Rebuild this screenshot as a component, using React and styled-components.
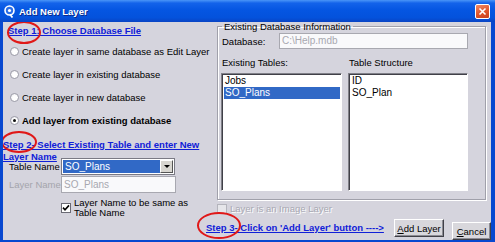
import React from "react";
import styled, { createGlobalStyle } from "styled-components";

const GlobalStyle = createGlobalStyle`
  html, body { margin: 0; padding: 0; background: #fff; }
  body { font-family: "Liberation Sans", Arial, sans-serif; }
`;

const Window = styled.div`
  width: 495px;
  height: 242px;
  display: flex;
  flex-direction: column;
  background: #0848d0;
  overflow: hidden;
  font-family: "Liberation Sans", Arial, sans-serif;
  font-size: 9.5px;
  color: #000;
`;

const TitleBar = styled.div`
  height: 22px;
  flex: none;
  display: flex;
  align-items: center;
  padding: 0 5px 0 4px;
  background: linear-gradient(180deg, #4a96f8 0%, #1363ea 14%, #0556e2 45%, #0452dc 80%, #0944c4 100%);
`;

const TitleText = styled.span`
  margin-left: 4px;
  color: #fff;
  font-weight: bold;
  font-size: 9.5px;
  text-shadow: 1px 1px 0 #0a2a8a;
  flex: 1;
`;

const CloseButton = styled.div`
  width: 15px;
  height: 15px;
  box-sizing: border-box;
  border: 1px solid #fff;
  border-radius: 2px;
  background: linear-gradient(160deg, #f08a66 0%, #e0542a 55%, #c8401c 100%);
  display: flex;
  align-items: center;
  justify-content: center;
`;

const Frame = styled.div`
  flex: 1;
  display: flex;
  padding: 0 4px 2px 3px;
  min-height: 0;
`;

const Body = styled.div`
  flex: 1;
  display: flex;
  flex-direction: column;
  background: #d5d4dd;
  padding: 0 0 0 5px;
  overflow: hidden;
`;

const Columns = styled.div`
  display: flex;
  align-items: flex-start;
`;

const LeftCol = styled.div`
  width: 209px;
  flex: none;
  display: flex;
  flex-direction: column;
  align-items: flex-start;
  padding-top: 3px;
`;

const StepLink = styled.div`
  position: relative;
  font-weight: bold;
  color: #1020d8;
  text-decoration: underline;
  line-height: 12px;
  white-space: nowrap;
  margin-left: ${(p) => p.$shift || 0}px;
  margin-top: ${(p) => p.$top || 0}px;
`;

const Ellipse = styled.div`
  position: absolute;
  left: ${(p) => p.$x}px;
  top: ${(p) => p.$y}px;
  width: ${(p) => p.$w}px;
  height: ${(p) => p.$h}px;
  border: 2px solid #e01818;
  border-radius: 50%;
  box-sizing: border-box;
  pointer-events: none;
`;

const RadioList = styled.div`
  margin-top: 3px;
  display: flex;
  flex-direction: column;
`;

const RadioRow = styled.div`
  height: 23px;
  display: flex;
  align-items: center;
  padding-left: 2px;
  font-weight: ${(p) => (p.$bold ? "bold" : "normal")};
`;

const Radio = styled.span`
  width: 9px;
  height: 9px;
  border-radius: 50%;
  box-sizing: border-box;
  border: 1px solid #9c9ca8;
  background: radial-gradient(circle at 60% 60%, #ffffff 40%, #e4e4ea 100%);
  margin-right: 3px;
  display: flex;
  align-items: center;
  justify-content: center;
  &::after {
    content: "";
    width: 3px;
    height: 3px;
    border-radius: 50%;
    background: ${(p) => (p.$checked ? "#111" : "transparent")};
  }
`;

const FieldRow = styled.div`
  display: flex;
  align-items: center;
  margin-top: ${(p) => p.$top || 0}px;
`;

const FieldLabel = styled.span`
  width: 52px;
  padding-left: 1px;
  color: ${(p) => (p.$disabled ? "#a4a4ac" : "#000")};
`;

const SelectBox = styled.div`
  width: 114px;
  height: 17px;
  box-sizing: border-box;
  border: 1px solid #7a7a84;
  background: #fff;
  display: flex;
  padding: 1px;
`;

const SelectValue = styled.span`
  flex: 1;
  background: #3169c6;
  color: #fff;
  padding-left: 2px;
  line-height: 13px;
  font-size: 10px;
`;

const DropButton = styled.span`
  width: 13px;
  box-sizing: border-box;
  background: #d8d6d0;
  border: 1px solid;
  border-color: #fff #555 #555 #fff;
  display: flex;
  align-items: center;
  justify-content: center;
  &::after {
    content: "";
    border-left: 3px solid transparent;
    border-right: 3px solid transparent;
    border-top: 3px solid #000;
  }
`;

const TextInput = styled.div`
  width: ${(p) => p.$w}px;
  height: ${(p) => p.$h || 17}px;
  box-sizing: border-box;
  border: 1px solid #a8a8b0;
  background: #f9f9fb;
  color: #a8a8b0;
  padding-left: 2px;
  line-height: ${(p) => (p.$h || 17) - 2}px;
  font-size: 10px;
`;

const CheckRow = styled.div`
  display: flex;
  align-items: flex-start;
  margin-top: ${(p) => p.$top || 0}px;
  margin-left: ${(p) => p.$indent || 0}px;
  color: ${(p) => (p.$disabled ? "#a8a8b2" : "#000")};
  text-shadow: ${(p) => (p.$disabled ? "1px 1px 0 #fff" : "none")};
`;

const CheckBox = styled.span`
  width: 10px;
  height: 10px;
  flex: none;
  box-sizing: border-box;
  border: 1px solid ${(p) => (p.$disabled ? "#b4b4bc" : "#6a6a74")};
  background: ${(p) => (p.$disabled ? "#e6e6ea" : "#fff")};
  margin-right: 3px;
  margin-top: ${(p) => p.$top || 0}px;
  display: flex;
  align-items: center;
  justify-content: center;
`;

const CheckText = styled.span`
  line-height: ${(p) => p.$lh || 10}px;
`;

const GroupBox = styled.fieldset`
  margin: 0;
  width: 269px;
  min-width: 0;
  box-sizing: border-box;
  padding: 0 3px 8px 3px;
  border: 1px solid #a0a0aa;
  box-shadow: 1px 1px 0 #fff, inset 1px 1px 0 #fff;
`;

const Legend = styled.legend`
  padding: 0 2px;
  margin-left: 1px;
  line-height: 9px;
`;

const DbRow = styled.div`
  display: flex;
  align-items: center;
  margin-top: 2px;
  padding-left: 1px;
`;

const DbLabel = styled.span`
  width: 57px;
`;

const ListGrid = styled.div`
  display: grid;
  grid-template-columns: 121px 120px;
  column-gap: 6px;
  margin-top: 8px;
`;

const ListTitle = styled.span`
  line-height: 12px;
  margin-bottom: 4px;
  padding-left: 1px;
`;

const ListBox = styled.div`
  height: 118px;
  box-sizing: border-box;
  background: #fff;
  border: 1px solid;
  border-color: #808088 #fff #fff #808088;
  box-shadow: inset 1px 1px 0 #404048;
  padding: 1px 1px 0 2px;
  display: flex;
  flex-direction: column;
`;

const ListItem = styled.span`
  line-height: 12px;
  font-size: 10px;
  padding-left: 1px;
  background: ${(p) => (p.$selected ? "#3169c6" : "transparent")};
  color: ${(p) => (p.$selected ? "#fff" : "#000")};
`;

const BottomRow = styled.div`
  display: flex;
  align-items: flex-start;
  padding-left: 198px;
  margin-top: 1px;
`;

const ButtonGroup = styled.div`
  margin-left: auto;
  display: flex;
  align-items: flex-start;
  gap: 8px;
`;

const Button = styled.div`
  width: ${(p) => p.$w}px;
  height: 18px;
  box-sizing: border-box;
  margin-top: ${(p) => p.$top || 0}px;
  background: #d8d7dc;
  border: 1px solid;
  border-color: #fff #404048 #404048 #fff;
  box-shadow: inset -1px -1px 0 #8c8c94;
  display: flex;
  align-items: center;
  justify-content: center;
  font-size: 9.5px;
  u { text-decoration: underline; }
`;

function TitleIcon() {
  return (
    <svg width="11" height="13" viewBox="0 0 11 13">
      <circle cx="5.5" cy="5.5" r="4.5" fill="#2a6ee8" stroke="#fff" strokeWidth="1.6" />
      <circle cx="5.5" cy="5.5" r="1.6" fill="#fff" />
      <path d="M6 9.5 L8.5 12.5" stroke="#fff" strokeWidth="1.8" />
    </svg>
  );
}

function CloseIcon() {
  return (
    <svg width="9" height="9" viewBox="0 0 9 9">
      <path d="M1.5 1.5 L7.5 7.5 M7.5 1.5 L1.5 7.5" stroke="#fff" strokeWidth="1.6" />
    </svg>
  );
}

function Tick() {
  return (
    <svg width="8" height="8" viewBox="0 0 8 8">
      <path d="M1 3.6 L3 5.8 L7 1.4" fill="none" stroke="#000" strokeWidth="1.6" />
    </svg>
  );
}

export default function App() {
  return (
    <Window>
      <GlobalStyle />
      <TitleBar>
        <TitleIcon />
        <TitleText>Add New Layer</TitleText>
        <CloseButton>
          <CloseIcon />
        </CloseButton>
      </TitleBar>
      <Frame>
        <Body>
          <Columns>
            <LeftCol>
              <StepLink>
                Step 1: Choose Database File
                <Ellipse $x={-1} $y={-4} $w={34} $h={23} />
              </StepLink>
              <RadioList>
                <RadioRow>
                  <Radio />
                  Create layer in same database as Edit Layer
                </RadioRow>
                <RadioRow>
                  <Radio />
                  Create layer in existing database
                </RadioRow>
                <RadioRow>
                  <Radio />
                  Create layer in new database
                </RadioRow>
                <RadioRow $bold>
                  <Radio $checked />
                  Add layer from existing database
                </RadioRow>
              </RadioList>
              <StepLink $shift={-5} $top={7}>
                Step 2- Select Existing Table and enter New
                <br />
                Layer Name
                <Ellipse $x={-2} $y={-8} $w={36} $h={22} />
              </StepLink>
              <FieldRow $top={-5}>
                <FieldLabel>Table Name</FieldLabel>
                <SelectBox>
                  <SelectValue>SO_Plans</SelectValue>
                  <DropButton />
                </SelectBox>
              </FieldRow>
              <FieldRow $top={1}>
                <FieldLabel $disabled>Layer Name</FieldLabel>
                <TextInput $w={115}>SO_Plans</TextInput>
              </FieldRow>
              <CheckRow $top={5} $indent={53}>
                <CheckBox $top={5}>
                  <Tick />
                </CheckBox>
                <CheckText>
                  Layer Name to be same as
                  <br />
                  Table Name
                </CheckText>
              </CheckRow>
            </LeftCol>
            <div>
              <GroupBox>
                <Legend>Existing Database Information</Legend>
                <DbRow>
                  <DbLabel>Database:</DbLabel>
                  <TextInput $w={189} $h={16}>C:\Help.mdb</TextInput>
                </DbRow>
                <ListGrid>
                  <ListTitle>Existing Tables:</ListTitle>
                  <ListTitle>Table Structure</ListTitle>
                  <ListBox>
                    <ListItem>Jobs</ListItem>
                    <ListItem $selected>SO_Plans</ListItem>
                  </ListBox>
                  <ListBox>
                    <ListItem>ID</ListItem>
                    <ListItem>SO_Plan</ListItem>
                  </ListBox>
                </ListGrid>
              </GroupBox>
              <CheckRow $top={4} $disabled>
                <CheckBox $disabled />
                <CheckText $lh={10}>Layer is an Image Layer</CheckText>
              </CheckRow>
            </div>
          </Columns>
          <BottomRow>
            <StepLink $top={3}>
              Step 3- Click on 'Add Layer' button ----&gt;
              <Ellipse $x={-9} $y={-10} $w={44} $h={27} />
            </StepLink>
            <ButtonGroup>
              <Button $w={50}>
                <span>
                  <u>A</u>dd Layer
                </span>
              </Button>
              <Button $w={39} $top={3}>
                <span>
                  <u>C</u>ancel
                </span>
              </Button>
            </ButtonGroup>
          </BottomRow>
        </Body>
      </Frame>
    </Window>
  );
}
